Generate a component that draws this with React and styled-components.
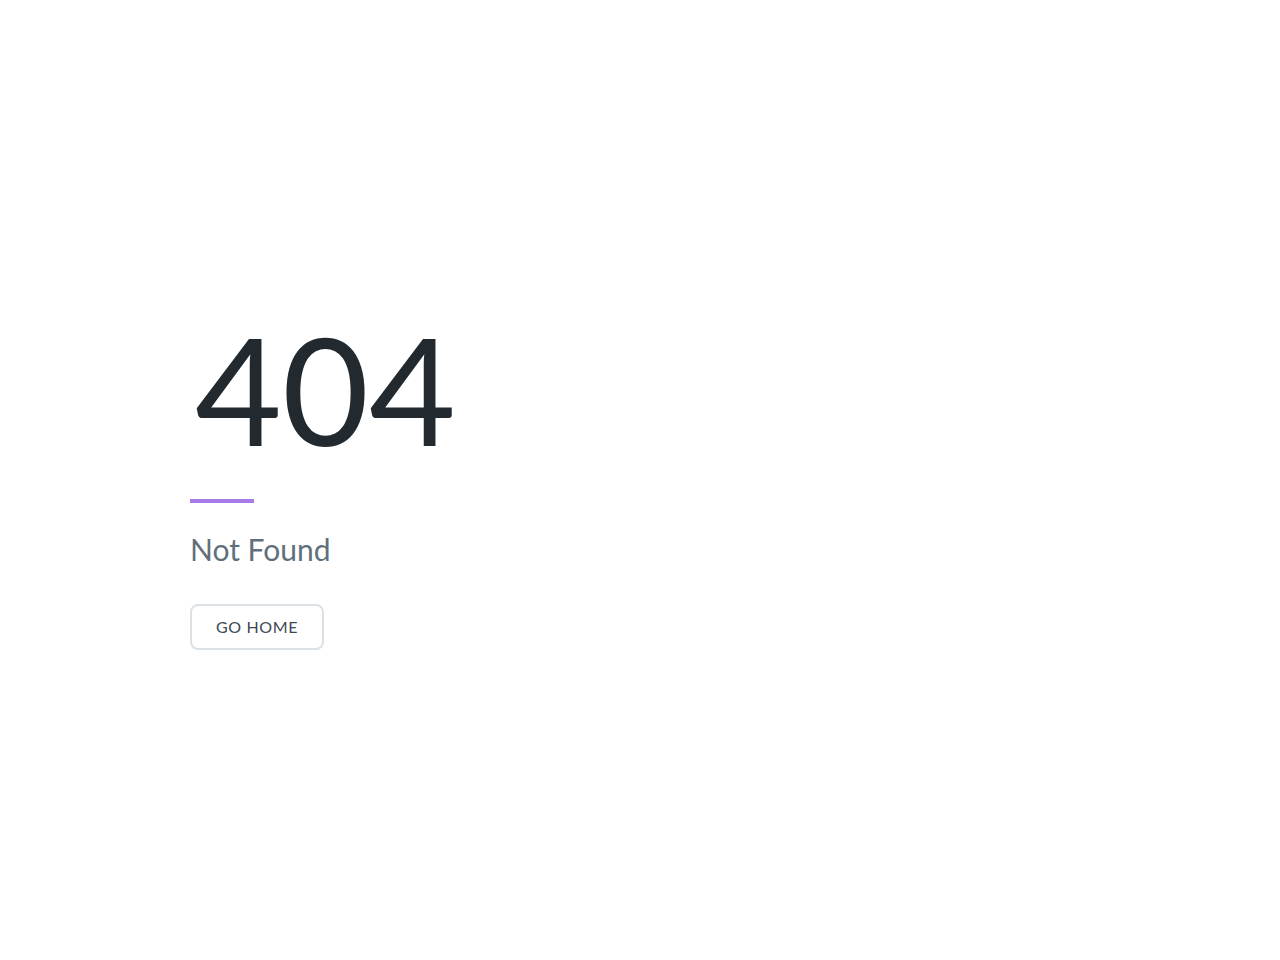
import React from 'react';
import styled, { createGlobalStyle } from 'styled-components';

const GlobalStyle = createGlobalStyle`
  html, body {
    margin: 0;
    padding: 0;
    background: #ffffff;
    font-family: 'Lato', 'Noto Sans', sans-serif;
    -webkit-font-smoothing: antialiased;
  }
`;

const Page = styled.div`
  display: flex;
  min-height: 100vh;
`;

const Half = styled.div`
  width: 50%;
  background: #ffffff;
  display: flex;
  align-items: center;
  justify-content: center;
`;

const Content = styled.div`
  width: 260px;
  margin: 32px;
`;

const Code = styled.div`
  color: #22292f;
  font-size: 150px;
  line-height: 157px;
  padding-bottom: 8px;
  font-weight: 400;
  margin-left: 5px;
`;

const Bar = styled.div`
  width: 64px;
  height: 4px;
  background: #a779e9;
  margin: 24px 0;
`;

const Message = styled.p`
  margin: 0 0 32px;
  color: #606f7b;
  font-size: 30px;
  line-height: 45px;
  font-weight: 400;
`;

const HomeButton = styled.button`
  background: transparent;
  color: #3d4852;
  font-family: inherit;
  font-size: 16px;
  line-height: 18px;
  text-transform: uppercase;
  letter-spacing: 0.04em;
  padding: 12px 24px;
  border: 2px solid #dae1e7;
  border-radius: 8px;
  cursor: pointer;

  &:hover {
    border-color: #b8c2cc;
  }
`;

const App = () => (
  <>
    <GlobalStyle />
    <Page>
      <Half>
        <Content>
          <Code>404</Code>
          <Bar />
          <Message>Not Found</Message>
          <a href="#">
            <HomeButton>Go Home</HomeButton>
          </a>
        </Content>
      </Half>
      <Half />
    </Page>
  </>
);

export default App;
